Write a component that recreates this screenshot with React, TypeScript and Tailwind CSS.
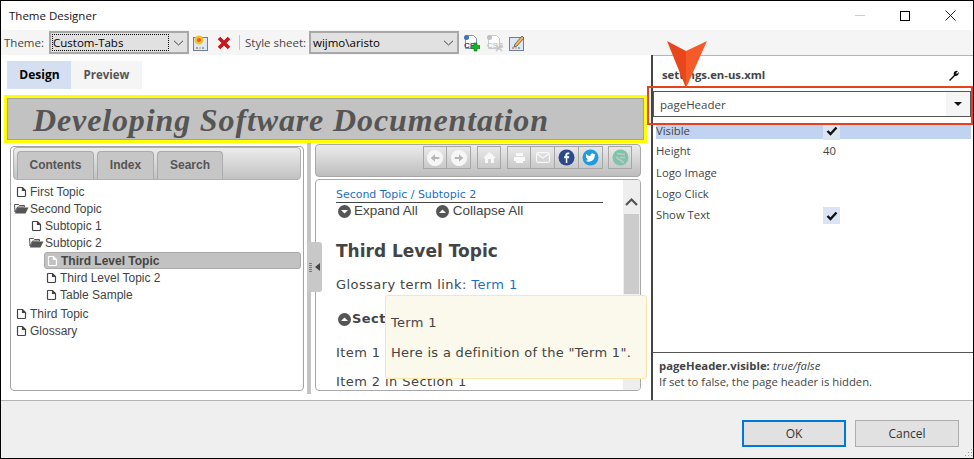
import React from "react";

const ui = "font-['Open_Sans','Noto_Sans',sans-serif]";

function Page({ color = "#444" }: { color?: string }) {
  return (
    <svg width="11" height="12" viewBox="0 0 11 12" className="shrink-0">
      <path d="M2 1.500h4.500l3 3V9.500a1 1 0 0 1-1 1H2.500a1 1 0 0 1-1-1V2a.5.5 0 0 1 .5-.5z M6.500 1.500v3h3" fill="none" stroke={color} strokeWidth="1.200" />
    </svg>
  );
}
function Folder() {
  return (
    <svg width="15" height="11" viewBox="0 0 15 11" className="shrink-0">
      <path d="M0.500 1.500h4l1 1h5v1.500H3.500L1 9z" fill="none" stroke="#555" />
      <path d="M3.500 4.500h11l-3 6H0.800z" fill="#555" />
    </svg>
  );
}
function TreeRow({ indent, icon, text }: { indent: string; icon: React.ReactNode; text: string }) {
  return (
    <div className={`flex h-[17px] items-center gap-[2px] ${indent}`}>
      <span className="flex w-[14px] justify-center">{icon}</span>
      <span>{text}</span>
    </div>
  );
}
function Circle({ up }: { up: boolean }) {
  return (
    <svg width="13" height="13" viewBox="0 0 13 13" className="shrink-0">
      <circle cx="6.500" cy="6.500" r="6.500" fill="#555" />
      <path d={up ? "M3 8h7L6.500 4.500z" : "M3 5h7L6.500 8.500z"} fill="#fff" />
    </svg>
  );
}
function NavBtn({ children, className = "" }: { children: React.ReactNode; className?: string }) {
  return (
    <div className={`flex h-[23px] w-[24px] items-center justify-center border border-[#a6a6a6] ${className}`}>
      {children}
    </div>
  );
}
function Arrow({ right }: { right: boolean }) {
  return (
    <svg width="16" height="16" viewBox="0 0 15 15">
      <circle cx="7.500" cy="7.500" r="7.500" fill="#f6f6f6" />
      <path d={right ? "M3.500 6.500h4V4l4 3.500-4 3.500V8.500h-4z" : "M11.500 6.500h-4V4l-4 3.500 4 3.500V8.500h4z"} fill="#b5b5b5" />
    </svg>
  );
}
function Check() {
  return (
    <span className="flex h-[17px] w-[17px] items-center justify-center bg-[#dbe4f3]">
      <svg width="12" height="10" viewBox="0 0 12 10">
        <path d="M1.500 5l3 3 6-6.500" fill="none" stroke="#111" strokeWidth="2.400" />
      </svg>
    </span>
  );
}
function Chevron() {
  return (
    <svg width="11" height="6" viewBox="0 0 11 6">
      <path d="M1 .8l4.500 4.200L10 .8" fill="none" stroke="#444" strokeWidth="1" />
    </svg>
  );
}
function PropRow({ label, h, value, active }: { label: string; h: string; value?: React.ReactNode; active?: boolean }) {
  return (
    <div className={`ml-[3px] flex items-center ${h} ${active ? "bg-[#c0d3f0]" : ""}`}>
      <span className="w-[167px]">{label}</span>
      <span>{value}</span>
    </div>
  );
}
function ThemeIcon({ pencil }: { pencil?: boolean }) {
  return (
    <svg width="16" height="18" viewBox="0 0 16 18" className="shrink-0">
      <rect x="0.500" y="3.500" width="14" height="13" fill="#dfe8f2" stroke="#6d7f96" />
      <rect x="3" y="13" width="2" height="2" fill="#d78a8a" />
      <rect x="6" y="13" width="2" height="2" fill="#e3c36b" />
      <rect x="9" y="13" width="2" height="2" fill="#8aa8d8" />
      {pencil ? (
        <path d="M6 10l7-8 2 2-7 8-3 1z" fill="#f2b84a" stroke="#444" strokeWidth=".7" />
      ) : (
        <>
          <circle cx="6" cy="6" r="4.500" fill="#f6c22b" />
          <circle cx="6" cy="6" r="2" fill="#e8601c" />
        </>
      )}
    </svg>
  );
}
function CssIcon({ add }: { add: boolean }) {
  const c = add ? "#1f4e94" : "#c4c4c4";
  return (
    <svg width="17" height="18" viewBox="0 0 17 18" className="shrink-0">
      <path d="M2.500 1.500h8l3 3v10h-11z" fill="#fff" stroke={add ? "#7f93ad" : "#c8c8c8"} />
      <circle cx="3.500" cy="3.500" r="2.500" fill={add ? "#3f73b8" : "#c0c0c0"} />
      <text x="1" y="13.500" fontSize="8" fontWeight="700" fontFamily="Liberation Sans" fill={c}>{add ? "CS" : "CSS"}</text>
      {add ? (
        <path d="M11 9h3v2.500h3v3h-3V17h-3v-2.500H8v-3h3z" fill="#19b424" stroke="#0c6d14" strokeWidth=".6" />
      ) : (
        <path d="M10 11l6 6M16 11l-6 6" stroke="#c4c4c4" strokeWidth="1.600" />
      )}
    </svg>
  );
}

export default function App() {
  return (
    <div className={`relative flex h-[459px] w-[974px] flex-col overflow-hidden border border-black bg-white text-[#333] ${ui}`}>
      {/* title bar */}
      <div className="flex h-[29px] shrink-0 items-center justify-between pl-[8px] pr-[17px]">
        <span className="text-[11.500px] text-[#1a1020]">Theme Designer</span>
        <div className="flex items-center gap-[35px]">
          <span className="h-px w-[10px] bg-[#cfcfcf]" />
          <span className="h-[10px] w-[10px] border border-black" />
          <svg width="11" height="11" viewBox="0 0 11 11">
            <path d="M.5.5l10 10M10.500.5l-10 10" stroke="#222" strokeWidth="1" />
          </svg>
        </div>
      </div>

      {/* toolbar */}
      <div className="flex h-[25px] shrink-0 items-center bg-[#f5f5f5] pl-[3px] text-[11.500px] text-[#444]">
        <span className="w-[45px]">Theme:</span>
        <div className="flex h-[23px] w-[140px] items-center justify-between border-2 border-[#a8a8a8] bg-[#e1e1e1] pl-[1px] pr-[3px] text-black">
          <span className="flex h-[17px] w-[117px] items-center border border-dotted border-black">Custom-Tabs</span>
          <Chevron />
        </div>
        <span className="ml-[4px]"><ThemeIcon /></span>
        <svg width="14" height="14" viewBox="0 0 14 14" className="ml-[8px] shrink-0">
          <path d="M2 2l10 10M12 2L2 12" stroke="#c8161d" strokeWidth="3.600" />
        </svg>
        <span className="ml-[8px] h-[15px] w-px bg-[#c4c4c4]" />
        <span className="ml-[5px] w-[64px]">Style sheet:</span>
        <div className="flex h-[23px] w-[150px] items-center justify-between border-2 border-[#a8a8a8] bg-[#e1e1e1] pl-[2px] pr-[3px] text-black">
          <span>wijmo\aristo</span>
          <Chevron />
        </div>
        <span className="ml-[4px]"><CssIcon add /></span>
        <span className="ml-[6px]"><CssIcon add={false} /></span>
        <span className="ml-[6px]"><ThemeIcon pencil /></span>
      </div>

      {/* body */}
      <div className="flex h-[345px] shrink-0">
        <div className="flex w-[650px] shrink-0 flex-col">
          <div className="ml-[6px] mt-[6px] flex h-[28px] text-[12px] font-bold">
            <span className="flex w-[64px] items-center justify-center bg-[#d4e0f2] pl-[1px] text-black">Design</span>
            <span className="flex w-[71px] items-center justify-center bg-[#f5f5f5] text-[11.500px] text-[#555]">Preview</span>
          </div>
          <div className="ml-[3px] mt-[6px] h-[48px] w-[643px] border-[3px] border-[#ffff00]">
            <div className="flex h-full items-center border border-[#a3a3a3] bg-[#c2c2c2] pl-[25px] pt-[1px] font-['Liberation_Serif',serif] text-[32px] font-bold italic tracking-[0.87px] text-[#555]">
              Developing Software Documentation
            </div>
          </div>
          <div className="flex min-h-0 flex-1 pb-[6px]">
            {/* left panel */}
            <div className="mb-[3px] ml-[9px] mt-[3px] w-[294px] rounded-[4px] border border-[#a3a3a3] p-[2px] pt-0 font-['Liberation_Sans',sans-serif] text-[12px] text-[#444]">
              <div className="flex h-[33px] items-end gap-[3px] rounded-[4px] border border-[#b0b0b0] bg-gradient-to-b from-[#ececec] to-[#c2c2c2] pl-[3px] text-[12px] font-bold text-[#555]">
                <span className="flex h-[28px] w-[77px] items-center justify-center rounded-t-[4px] border border-b-0 border-[#aaa] bg-[#c6c6c6] pb-[2px]">Contents</span>
                <span className="flex h-[28px] w-[57px] items-center justify-center rounded-t-[4px] border border-b-0 border-[#aaa] bg-[#c6c6c6] pb-[2px]">Index</span>
                <span className="flex h-[28px] w-[66px] items-center justify-center rounded-t-[4px] border border-b-0 border-[#aaa] bg-[#c6c6c6] pb-[2px]">Search</span>
              </div>
              <div className="mt-[3px] flex flex-col pl-[1px]">
                <TreeRow indent="" icon={<Page />} text="First Topic" />
                <TreeRow indent="" icon={<Folder />} text="Second Topic" />
                <TreeRow indent="pl-[15px]" icon={<Page />} text="Subtopic 1" />
                <TreeRow indent="pl-[15px]" icon={<Folder />} text="Subtopic 2" />
                <div className="ml-[30px] mt-[1px] flex h-[17px] items-center gap-[2px] rounded-[3px] border border-[#aaa] bg-[#c2c2c2] font-bold text-[#444]">
                  <span className="flex w-[14px] justify-center"><Page color="#fff" /></span>
                  <span>Third Level Topic</span>
                </div>
                <TreeRow indent="pl-[30px]" icon={<Page />} text="Third Level Topic 2" />
                <TreeRow indent="pl-[30px]" icon={<Page />} text="Table Sample" />
                <TreeRow indent="mt-[2px]" icon={<Page />} text="Third Topic" />
                <TreeRow indent="" icon={<Page />} text="Glossary" />
              </div>
            </div>
            {/* splitter */}
            <div className="ml-[3px] w-[4px] bg-[#c4c4c4]" />
            {/* right help panel */}
            <div className="ml-[4px] flex w-[326px] flex-col pb-[3px] pt-[1px]">
              <div className="flex h-[33px] shrink-0 items-start justify-end rounded-[4px] border border-[#a8a8a8] bg-gradient-to-b from-[#ececec] to-[#bdbdbd] pr-[8px] pt-[1px]">
                <NavBtn><Arrow right={false} /></NavBtn>
                <NavBtn className="border-l-0"><Arrow right /></NavBtn>
                <NavBtn className="ml-[6px]">
                  <svg width="13" height="13" viewBox="0 0 13 13"><path d="M6.500 1L0 7h2v5h3V8h3v4h3V7h2z" fill="#f8f8f8" /></svg>
                </NavBtn>
                <NavBtn className="ml-[6px]">
                  <svg width="13" height="12" viewBox="0 0 13 12"><path d="M3 1h7v3H3zM1 5h11v4H10v2H3V9H1z" fill="#f8f8f8" /></svg>
                </NavBtn>
                <NavBtn className="border-l-0">
                  <svg width="14" height="11" viewBox="0 0 13 10"><rect x=".5" y=".5" width="12" height="9" rx="1.500" fill="none" stroke="#f8f8f8" /><path d="M1 1.500l5.500 4 5.500-4" fill="none" stroke="#f8f8f8" /></svg>
                </NavBtn>
                <NavBtn className="border-l-0">
                  <svg width="17" height="17" viewBox="0 0 17 17"><circle cx="8.500" cy="8.500" r="8" fill="#2b4a8b" /><path d="M9.300 14V9.200h1.700l.3-1.900h-2V6.200c0-.6.2-.9.9-.9h1.100V3.600c-.3 0-.9-.1-1.500-.1-1.500 0-2.500.9-2.500 2.500v1.300H6.100v1.900h1.700V14z" fill="#fff" /></svg>
                </NavBtn>
                <NavBtn className="border-l-0">
                  <svg width="17" height="17" viewBox="0 0 17 17"><circle cx="8.500" cy="8.500" r="8" fill="#1f9ce0" /><path d="M13.500 5.500c-.4.2-.8.3-1.200.3.400-.3.800-.7.900-1.100-.4.200-.9.400-1.300.500a2 2 0 0 0-3.500 1.800C6.700 6.900 5.200 6.100 4.200 4.900c-.6 1-.3 2.100.6 2.700-.3 0-.6-.1-.9-.2 0 1 .7 1.800 1.600 2-.3.100-.6.100-.9 0 .3.800 1 1.400 1.900 1.400-.9.700-2 1-3 .9 3.800 2.300 9.200.3 9.300-5.500.3-.3.500-.5.700-.8z" fill="#fff" /></svg>
                </NavBtn>
                <NavBtn className="ml-[5px]">
                  <svg width="17" height="17" viewBox="0 0 17 17"><circle cx="8.500" cy="8.500" r="8" fill="#7cc5aa" /><path d="M5 4.500l8 1M4 8l8 6M8 8.500h5" stroke="#c4c4c4" strokeWidth="1.600" fill="none" /></svg>
                </NavBtn>
              </div>
              <div className="relative mt-[2px] flex min-h-0 flex-1 overflow-hidden rounded-[4px] border border-[#a8a8a8]">
                <div className="min-w-0 flex-1 pl-[20px] pr-[20px] pt-[8px] font-['DejaVu_Sans',sans-serif] text-[13px] tracking-[0.42px] text-[#444]">
                  <div className="box-content h-[13px] border-b border-[#444] pb-[1px] text-[11px] leading-[14px] tracking-[-0.03px] text-[#1a6fc4]">Second Topic / Subtopic 2</div>
                  <div className="flex h-[17px] items-center pl-[2px] font-['Liberation_Sans',sans-serif] text-[13.500px] tracking-normal">
                    <Circle up={false} />
                    <span className="ml-[3px]">Expand All</span>
                    <span className="ml-[18px]"><Circle up /></span>
                    <span className="ml-[4px]">Collapse All</span>
                  </div>
                  <div className="mt-[19px] h-[24px] text-[17px] font-bold leading-[24px] tracking-normal">Third Level Topic</div>
                  <div className="mt-[14px] h-[16px] leading-[16px]">
                    Glossary term link: <span className="text-[#1a6fc4]">Term 1</span>
                  </div>
                  <div className="mt-[18px] flex h-[16px] items-center pl-[2px] font-bold leading-[16px]">
                    <Circle up />
                    <span className="ml-[1px]">Section 1</span>
                  </div>
                  <div className="mt-[18px] h-[16px] whitespace-nowrap leading-[16px]">Item 1 in Section 1</div>
                  <div className="mt-[13px] h-[16px] whitespace-nowrap leading-[16px]">Item 2 in Section 1</div>
                </div>
                <div className="flex w-[17px] shrink-0 flex-col bg-[#eeeeee]">
                  <div className="flex h-[34px] items-center justify-center pt-[10px]">
                    <svg width="13" height="8" viewBox="0 0 13 8"><path d="M1 7l5.500-5.500L12 7" fill="none" stroke="#555" strokeWidth="2.200" /></svg>
                  </div>
                  <div className="mx-auto h-[80px] w-[15px] bg-[#cccccc]" />
                </div>
              </div>
            </div>
          </div>
        </div>
        {/* property panel */}
        <div className="flex min-w-0 flex-1 flex-col border-l-2 border-[#444] text-[11.300px] text-[#444]">
          <div className="flex h-[33px] shrink-0 items-center justify-between border-t border-[#b4b4b4] pl-[9px] pr-[14px] pt-[7px] font-bold">
            <span>settings.en-us.xml</span>
            <svg width="11" height="11" viewBox="0 0 11 11"><path d="M1 10l5-5a3 3 0 0 1 4-4L8 3l1 1 1.500-2A3 3 0 0 1 7 6l-5 5z" fill="#111" /></svg>
          </div>
          <div className="mr-[2px] mt-[3px] flex h-[26px] shrink-0 items-center justify-between border border-[#555] pl-[6px] text-[11.500px]">
            <span className="pt-[1px]">pageHeader</span>
            <span className="flex h-full w-[24px] items-center justify-center bg-[#f5f5f5]">
              <svg width="8" height="4" viewBox="0 0 8 4"><path d="M0 0h8L4 4z" fill="#111" /></svg>
            </span>
          </div>
          <div className="mr-[2px] mt-[6px] flex flex-col">
            <PropRow label="Visible" h="h-[16px]" value={<Check />} active />
            <PropRow label="Height" h="mt-[1px] h-[23px]" value="40" />
            <PropRow label="Logo Image" h="h-[21px]" />
            <PropRow label="Logo Click" h="h-[21px]" />
            <PropRow label="Show Text" h="h-[21px]" value={<Check />} />
          </div>
          <div className="mt-auto flex h-[48px] shrink-0 flex-col border-t border-[#555] pl-[6px] pt-[5px] leading-[16px]">
            <div><b>pageHeader.visible:</b> <i>true/false</i></div>
            <div>If set to false, the page header is hidden.</div>
          </div>
        </div>
      </div>

      {/* footer */}
      <div className="flex min-h-0 flex-1 items-start justify-end gap-[9px] border-t border-[#b4b4b4] bg-[#efefef] pr-[14px] pt-[19px] text-[12px] text-[#333]">
        <span className="flex h-[27px] w-[104px] items-center justify-center border-2 border-[#0078d7] bg-[#e1e1e1]">OK</span>
        <span className="flex h-[27px] w-[104px] items-center justify-center border border-[#adadad] bg-[#e1e1e1]">Cancel</span>
      </div>

      {/* overlays */}
      <div className="absolute left-[306px] top-[241px] flex h-[50px] w-[15px] items-center justify-end gap-[3px] rounded-r-[3px] bg-[#c8c8c8] pr-[2px]">
        <span className="h-[9px] w-[3px] bg-[repeating-linear-gradient(to_bottom,#777_0,#777_1px,transparent_1px,transparent_2px)]" />
        <svg width="5" height="8" viewBox="0 0 5 8"><path d="M5 0v8L0 4z" fill="#444" /></svg>
      </div>
      <div className="absolute left-[384px] top-[294px] h-[84px] w-[262px] rounded-[3px] border border-[#fbe8a6] bg-[#fbf8ec] pl-[5px] pt-[19px] font-['DejaVu_Sans',sans-serif] text-[13px] leading-[16px] tracking-[0.3px] text-[#444]">
        <div>Term 1</div>
        <div className="mt-[14px] whitespace-nowrap">Here is a definition of the "Term 1".</div>
      </div>
      <div className="absolute left-[646px] top-[85px] h-[39px] w-[326px] border-2 border-[#e8401c]" />
      <svg width="42" height="50" viewBox="0 0 42 50" className="absolute left-[665px] top-[38px]">
        <path d="M1 2l19 10v37z" fill="#e8471c" />
        <path d="M41 2L20 12v37z" fill="#f65a28" />
      </svg>
      <svg width="10" height="10" viewBox="0 0 10 10" className="absolute bottom-0 right-0">
        <path d="M8 1h1v1H8zM5 4h1v1H5zM8 4h1v1H8zM2 7h1v1H2zM5 7h1v1H5zM8 7h1v1H8z" fill="#9a9a9a" />
      </svg>
    </div>
  );
}
